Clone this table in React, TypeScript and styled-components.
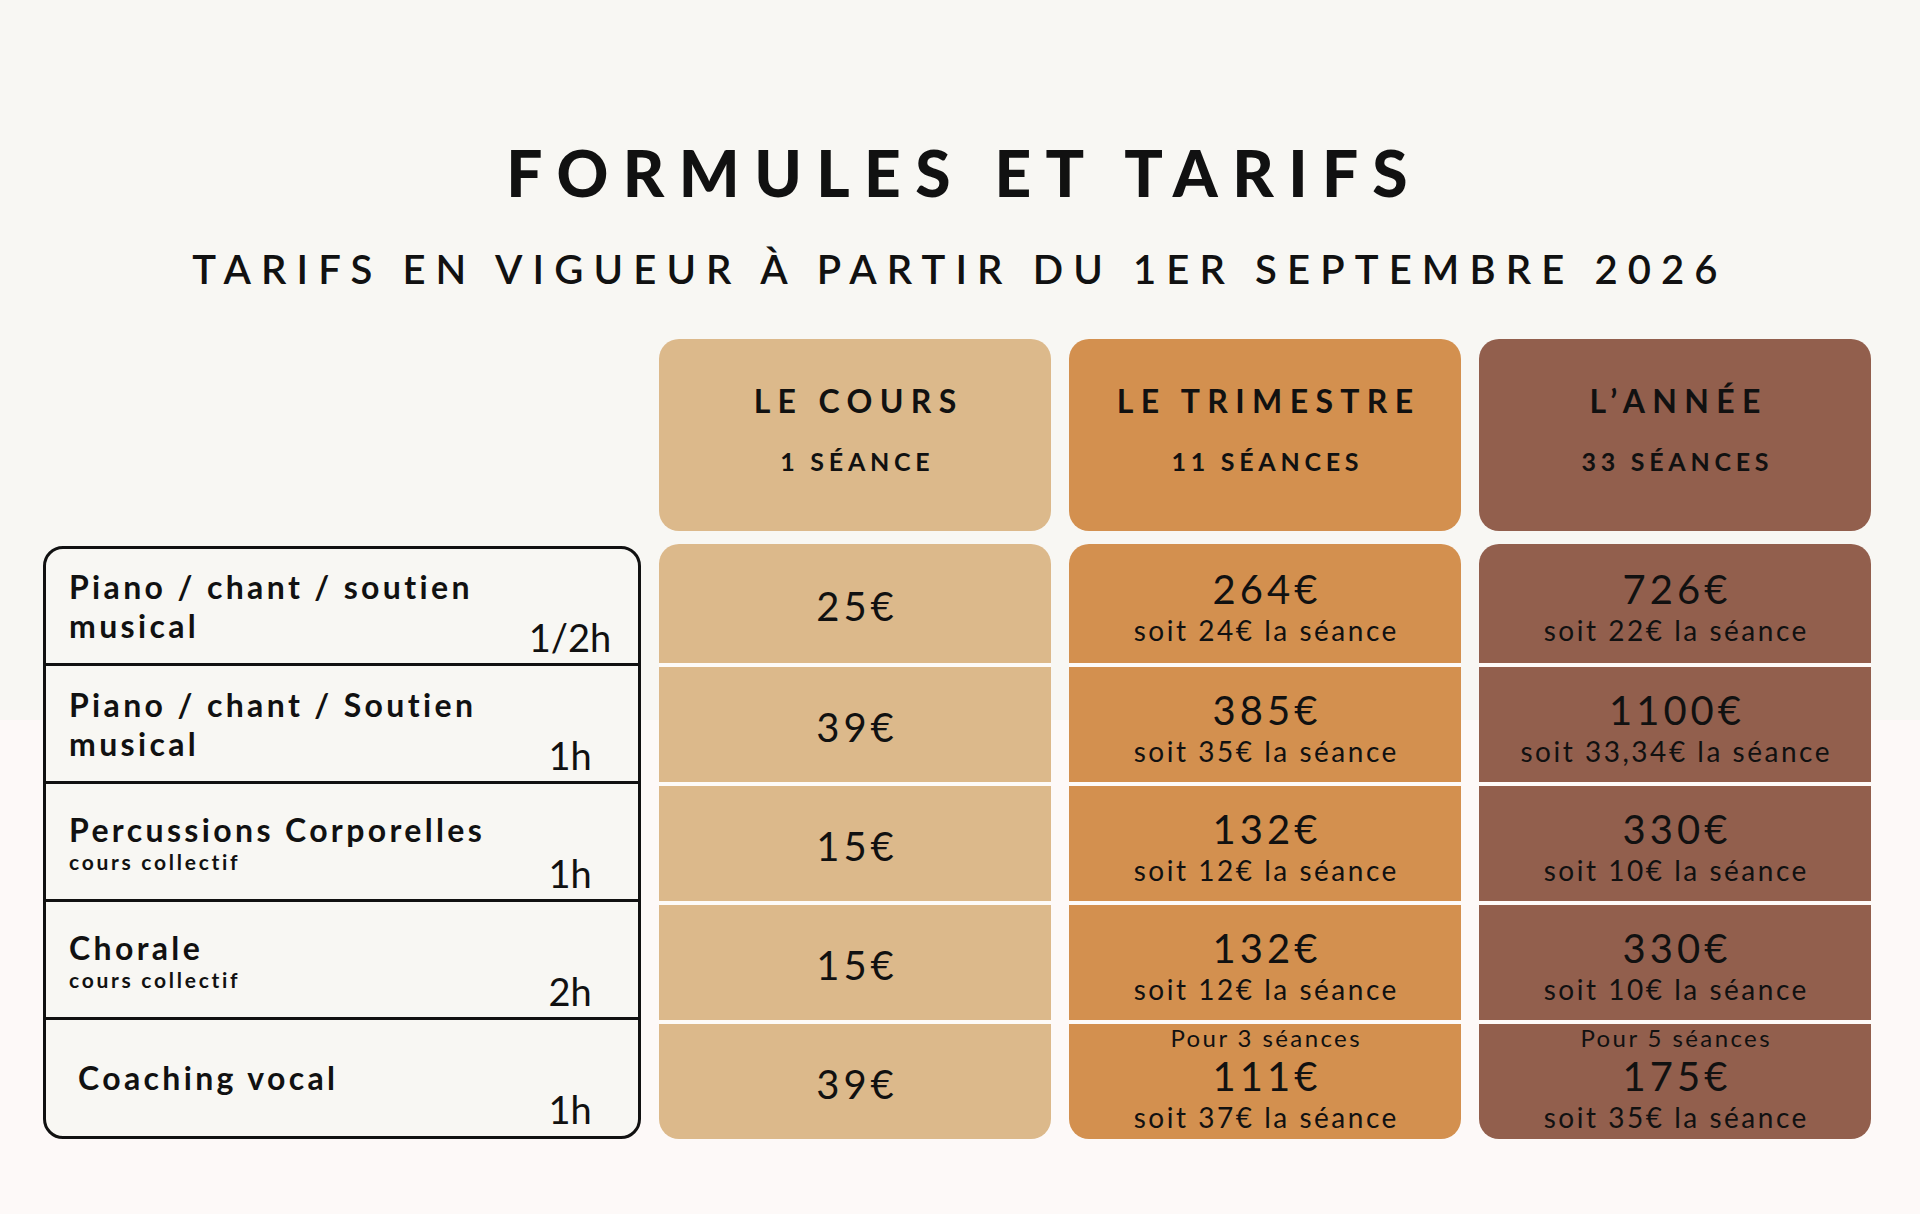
import React from 'react';
import styled, { createGlobalStyle } from 'styled-components';

const GlobalStyle = createGlobalStyle`
  html, body {
    margin: 0;
    padding: 0;
  }

  body {
    background: linear-gradient(to bottom, #f8f7f3 0, #f8f7f3 720px, #fdf9f8 720px, #fdf9f8 100%);
    color: #111111;
    font-family: Lato, 'Noto Sans', 'Liberation Sans', sans-serif;
  }
`;

const Page = styled.div`
  box-sizing: border-box;
  display: flex;
  flex-direction: column;
  align-items: center;
  height: 1214px;
  padding-top: 141px;
  width: 1920px;
`;

const Title = styled.h1`
  font-size: 64px;
  font-weight: 900;
  letter-spacing: 0.225em;
  line-height: 1;
  margin: 0 0 44px 0.13em;
`;

const Subtitle = styled.h2`
  font-size: 40px;
  font-weight: 600;
  letter-spacing: 0.253em;
  line-height: 1;
  margin: 0 0 50px 0;
`;

const Table = styled.div`
  align-self: flex-start;
  display: grid;
  grid-template-columns: 598px repeat(3, 392px);
  column-gap: 18px;
  margin-left: 43px;
  row-gap: 13px;
`;

const HeaderCell = styled.div<{ $bg: string }>`
  align-items: center;
  background: ${(props) => props.$bg};
  border-radius: 20px;
  box-sizing: border-box;
  display: flex;
  flex-direction: column;
  gap: 32px;
  height: 192px;
  padding-top: 46px;
`;

const HeaderTitle = styled.div`
  font-size: 32px;
  font-weight: 700;
  letter-spacing: 0.23em;
  line-height: 1;
  margin-left: 0.23em;
`;

const HeaderSub = styled.div`
  font-size: 25px;
  font-weight: 700;
  letter-spacing: 0.19em;
  line-height: 1;
  margin-left: 0.19em;
`;

const LabelBox = styled.div`
  background: #f8f7f3;
  border: 3px solid #111111;
  border-radius: 20px;
  display: flex;
  flex-direction: column;
  margin-top: 2px;
  overflow: hidden;
`;

const LabelRow = styled.div<{ $first?: boolean }>`
  border-top: ${(props) => (props.$first ? 'none' : '3px solid #111111')};
  box-sizing: border-box;
  display: grid;
  grid-template-columns: 1fr 100px;
  height: ${(props) => (props.$first ? '114px' : '118px')};
  padding: 0 18px 0 23px;
`;

const LabelText = styled.div<{ $indent?: boolean }>`
  align-self: center;
  padding-left: ${(props) => (props.$indent ? '9px' : '0')};
`;

const LabelName = styled.div`
  font-size: 32px;
  font-weight: 700;
  letter-spacing: 0.105em;
  line-height: 39px;
`;

const LabelNote = styled.div`
  font-size: 21px;
  font-weight: 700;
  letter-spacing: 0.13em;
  line-height: 25px;
`;

const Duration = styled.div`
  align-self: end;
  font-size: 38px;
  line-height: 46px;
  padding-bottom: 3px;
  text-align: center;
`;

const PriceColumn = styled.div`
  background: #fdfbf9;
  border-radius: 20px;
  display: flex;
  flex-direction: column;
  gap: 4px;
  overflow: hidden;
`;

const PriceCell = styled.div<{ $bg: string; $first?: boolean; $lift?: boolean }>`
  align-items: center;
  background: ${(props) => props.$bg};
  box-sizing: border-box;
  display: flex;
  flex-direction: column;
  height: ${(props) => (props.$first ? '119px' : '115px')};
  justify-content: center;
  padding: ${(props) => (props.$lift ? '0 0 7px' : '4px 0 0')};
`;

const Price = styled.div`
  font-size: 40px;
  letter-spacing: 0.1em;
  line-height: 48px;
  margin-left: 0.1em;
`;

const PriceNote = styled.div`
  font-size: 28px;
  letter-spacing: 0.09em;
  line-height: 34px;
  margin-left: 0.09em;
`;

const PriceIntro = styled.div`
  font-size: 24px;
  letter-spacing: 0.1em;
  line-height: 29px;
  margin-left: 0.1em;
`;

type Course = { name: string[]; note?: string; duration: string; indent?: boolean };

const courses: Course[] = [
  { name: ['Piano / chant / soutien', 'musical'], duration: '1/2h' },
  { name: ['Piano / chant / Soutien', 'musical'], duration: '1h' },
  { name: ['Percussions Corporelles'], note: 'cours collectif', duration: '1h' },
  { name: ['Chorale'], note: 'cours collectif', duration: '2h' },
  { name: ['Coaching vocal'], duration: '1h', indent: true },
];

type Offer = { intro?: string; price: string; note?: string };

type Formula = { title: string; sub: string; bg: string; offers: Offer[] };

const formulas: Formula[] = [
  {
    title: 'LE COURS',
    sub: '1 SÉANCE',
    bg: '#dcb98b',
    offers: [
      { price: '25€' },
      { price: '39€' },
      { price: '15€' },
      { price: '15€' },
      { price: '39€' },
    ],
  },
  {
    title: 'LE TRIMESTRE',
    sub: '11 SÉANCES',
    bg: '#d3904f',
    offers: [
      { price: '264€', note: 'soit 24€ la séance' },
      { price: '385€', note: 'soit 35€ la séance' },
      { price: '132€', note: 'soit 12€ la séance' },
      { price: '132€', note: 'soit 12€ la séance' },
      { intro: 'Pour 3 séances', price: '111€', note: 'soit 37€ la séance' },
    ],
  },
  {
    title: 'L’ANNÉE',
    sub: '33 SÉANCES',
    bg: '#925f4d',
    offers: [
      { price: '726€', note: 'soit 22€ la séance' },
      { price: '1100€', note: 'soit 33,34€ la séance' },
      { price: '330€', note: 'soit 10€ la séance' },
      { price: '330€', note: 'soit 10€ la séance' },
      { intro: 'Pour 5 séances', price: '175€', note: 'soit 35€ la séance' },
    ],
  },
];

const App: React.FC = () => {
  return (
    <>
      <GlobalStyle />
      <Page>
        <Title>FORMULES ET TARIFS</Title>
        <Subtitle>TARIFS EN VIGUEUR À PARTIR DU 1ER SEPTEMBRE 2026</Subtitle>
        <Table>
          <div />
          {formulas.map((f) => (
            <HeaderCell key={f.title} $bg={f.bg}>
              <HeaderTitle>{f.title}</HeaderTitle>
              <HeaderSub>{f.sub}</HeaderSub>
            </HeaderCell>
          ))}

          <LabelBox>
            {courses.map((c, i) => (
              <LabelRow key={i} $first={i === 0}>
                <LabelText $indent={c.indent}>
                  {c.name.map((line) => (
                    <LabelName key={line}>{line}</LabelName>
                  ))}
                  {c.note && <LabelNote>{c.note}</LabelNote>}
                </LabelText>
                <Duration>{c.duration}</Duration>
              </LabelRow>
            ))}
          </LabelBox>

          {formulas.map((f) => (
            <PriceColumn key={f.title}>
              {f.offers.map((o, i) => (
                <PriceCell key={i} $bg={f.bg} $first={i === 0} $lift={Boolean(o.intro)}>
                  {o.intro && <PriceIntro>{o.intro}</PriceIntro>}
                  <Price>{o.price}</Price>
                  {o.note && <PriceNote>{o.note}</PriceNote>}
                </PriceCell>
              ))}
            </PriceColumn>
          ))}
        </Table>
      </Page>
    </>
  );
};

export default App;
